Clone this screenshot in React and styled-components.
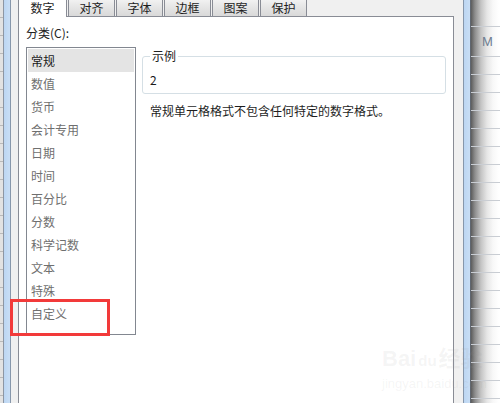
import React from "react";
import styled, { createGlobalStyle } from "styled-components";

const GlobalStyle = createGlobalStyle`
html, body {
	margin: 0;
	padding: 0;
	background: #ffffff;
}
body {
	font-family: "Noto Sans CJK SC", "Noto Sans", sans-serif;
	font-size: 12px;
}
`;

const TABS = ["数字", "对齐", "字体", "边框", "图案", "保护"];
const CATEGORIES = [
	"常规", "数值", "货币", "会计专用", "日期", "时间",
	"百分比", "分数", "科学记数", "文本", "特殊", "自定义",
];
const SHEET_ROWS = [27, 30, 18, 18, 18, 18, 18, 18, 18, 18, 18, 18, 18, 18, 18, 18, 18, 18, 18, 18, 18, 18];

export default function App() {
	return (
		<Screen>
			<GlobalStyle />
			<LeftSheet />
			<FrameEdge />
			<Dialog>
				<TabStrip>
					{TABS.map((tab, i) => (
						<Tab key={tab} $active={i === 0}>{tab}</Tab>
					))}
				</TabStrip>
				<TabPage>
					<CategoryLabel>分类(C):</CategoryLabel>
					<PageBody>
						<CategoryList>
							{CATEGORIES.map((item, i) => (
								<CategoryItem key={item} $selected={i === 0}>{item}</CategoryItem>
							))}
						</CategoryList>
						<Detail>
							<Sample>
								<legend>示例</legend>
								<SampleValue>2</SampleValue>
							</Sample>
							<Description>常规单元格格式不包含任何特定的数字格式。</Description>
						</Detail>
					</PageBody>
				</TabPage>
			</Dialog>
			<FrameEdge />
			<RightSheet>
				{SHEET_ROWS.map((h, i) => (
					<SheetRow key={i} style={{ height: h }}>{i === 1 ? "M" : ""}</SheetRow>
				))}
			</RightSheet>
			<Highlight />
			<Watermark>
				<span className="brand">Bai<b>du</b>经验</span>
				<span className="site">jingyan.baidu.com</span>
			</Watermark>
		</Screen>
	);
}

const Screen = styled.div`
position: relative;
display: flex;
width: 500px;
height: 403px;
overflow: hidden;
background: #ffffff;
`;

const LeftSheet = styled.div`
width: 3px;
flex-shrink: 0;
border-right: 1px solid #8d96a3;
background: repeating-linear-gradient(to bottom, #e2e2e2 0, #e2e2e2 17px, #b9b9b9 17px, #b9b9b9 18px);
`;

const FrameEdge = styled.div`
width: 6px;
flex-shrink: 0;
background: linear-gradient(to right, #bcd6f2, #c9def5);
`;

const Dialog = styled.div`
flex-shrink: 0;
display: flex;
flex-direction: column;
margin-top: -4px;
height: 420px;
padding: 0 9px 0 7px;
box-sizing: border-box;
width: 454px;
background: #f0f0f0;
border-left: 1px solid #8797ab;
border-right: 1px solid #8797ab;
`;

const TabStrip = styled.div`
display: flex;
align-items: flex-end;
height: 20px;
flex-shrink: 0;
`;

const Tab = styled.div`
position: relative;
box-sizing: border-box;
display: flex;
align-items: center;
justify-content: center;
width: ${(p) => (p.$active ? "49px" : "47px")};
height: ${(p) => (p.$active ? "21px" : "18px")};
margin-left: ${(p) => (p.$active ? "0" : "1px")};
margin-bottom: ${(p) => (p.$active ? "-1px" : "0")};
padding-top: ${(p) => (p.$active ? "2px" : "1px")};
z-index: ${(p) => (p.$active ? 1 : 0)};
border: 1px solid #898c95;
border-bottom: none;
background: ${(p) => (p.$active ? "#ffffff" : "linear-gradient(to bottom, #f3f3f3, #e6e6e6 45%, #d9d9d9)")};
color: #1e1e1e;
font-size: 12px;
line-height: 14px;
`;

const TabPage = styled.div`
flex: 1;
background: #ffffff;
border: 1px solid #898c95;
padding: 9px 7px 0 7px;
`;

const CategoryLabel = styled.div`
color: #222222;
line-height: 14px;
`;

const PageBody = styled.div`
display: flex;
align-items: flex-start;
gap: 6px;
margin-top: 7px;
`;

const CategoryList = styled.div`
box-sizing: border-box;
width: 110px;
height: 288px;
padding: 1px;
border: 1px solid #828790;
display: flex;
flex-direction: column;
flex-shrink: 0;
`;

const CategoryItem = styled.div`
height: 23px;
padding-left: 3px;
display: flex;
align-items: center;
line-height: 14px;
color: ${(p) => (p.$selected ? "#1a1a1a" : "#6f6f6f")};
background: ${(p) => (p.$selected ? "#e4e4e4" : "transparent")};
`;

const Detail = styled.div`
flex: 1;
display: flex;
flex-direction: column;
`;

const Sample = styled.fieldset`
margin: 2px 0 0 0;
padding: 10px 7px 6px 7px;
border: 1px solid #d5dfe5;
border-radius: 3px;
min-width: 0;

legend{
	padding: 0 2px;
	line-height: 14px;
	color: #222222;
}
`;

const SampleValue = styled.div`
line-height: 14px;
color: #1a1a1a;
`;

const Description = styled.div`
margin-top: 10px;
padding-left: 8px;
line-height: 14px;
color: #1e1e1e;
`;

const RightSheet = styled.div`
flex: 1;
display: flex;
flex-direction: column;
border-left: 1px solid #5f6670;
background: linear-gradient(to right, #5c5c5c 0, #8e8e8e 4px, #c4c4c4 10px, #e6e6e6 16px, #f8f8f8 22px, #ffffff 28px);
`;

const SheetRow = styled.div`
flex-shrink: 0;
box-sizing: border-box;
border-bottom: 1px solid #c9cdd3;
display: flex;
align-items: center;
padding-left: 11px;
font-family: "Liberation Sans", Arial, sans-serif;
font-size: 13px;
color: #6f7d90;
`;

const Highlight = styled.div`
position: absolute;
left: 10px;
top: 299px;
width: 100px;
height: 37px;
box-sizing: border-box;
border: 3px solid #f23a3a;
`;

const Watermark = styled.div`
position: absolute;
left: 382px;
top: 346px;
display: flex;
flex-direction: column;
align-items: flex-start;
pointer-events: none;
color: rgba(150, 150, 150, 0.1);

.brand{
	font-family: "Liberation Sans", "Noto Sans CJK SC", sans-serif;
	font-size: 22px;
	font-weight: 700;
	line-height: 26px;
}

.brand b{
	font-size: 15px;
	margin: 0 2px;
}

.site{
	font-family: "Liberation Sans", sans-serif;
	font-size: 13px;
	line-height: 16px;
	margin-top: 2px;
}
`;
